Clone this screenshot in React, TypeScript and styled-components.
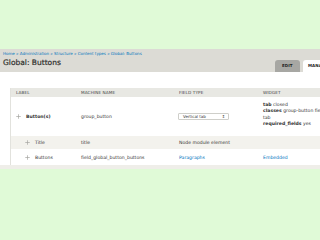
import React from 'react'
import styled, { createGlobalStyle } from 'styled-components'

const Global = createGlobalStyle`
  html, body {
    margin: 0;
    padding: 0;
    background: #e0fad7;
    overflow: hidden;
  }
  body {
    font-family: "DejaVu Sans", "Liberation Sans", sans-serif;
    color: #333;
  }
`

const Page = styled.div`
  width: 320px;
  height: 240px;
  padding-top: 49px;
  box-sizing: border-box;
  overflow: hidden;
`

const Header = styled.div`
  background: #dcdbd5;
  height: 23px;
  padding-left: 3px;
  display: flex;
  flex-direction: column;
  box-sizing: border-box;
`

const Crumbs = styled.div`
  font-size: 4px;
  line-height: 5px;
  padding-top: 2px;
  color: #0074bd;
  white-space: nowrap;
`

const TitleRow = styled.div`
  flex: 1;
  display: flex;
  align-items: flex-end;
  justify-content: space-between;
`

const Title = styled.h1`
  margin: 0 0 4px;
  font-size: 7.5px;
  line-height: 10px;
  font-weight: normal;
  color: #2e2e2b;
  -webkit-text-stroke: 0.2px #2e2e2b;
`

const Tabs = styled.div`
  display: flex;
  gap: 3px;
  align-self: flex-end;
  margin-right: -20px;
`

const Tab = styled.div<{ $active?: boolean }>`
  height: 12px;
  width: ${p => (p.$active ? '37px' : '25px')};
  box-sizing: border-box;
  padding-left: ${p => (p.$active ? '5px' : '7px')};
  border-radius: 3px 3px 0 0;
  background: ${p => (p.$active ? '#fff' : '#a7a7a3')};
  font-size: 4px;
  font-weight: bold;
  line-height: 12px;
  color: #222;
  letter-spacing: 0.1px;
`

const Content = styled.div`
  background: #fff;
  padding: 16px 0 0 10px;
  border-bottom: 4px solid #efeee9;
`

const Table = styled.div`
  width: 340px;
  border-left: 1px solid #e2e2dd;
  font-size: 4.6px;
  color: #333;
`

const Row = styled.div<{ $bg?: string; $height: number }>`
  display: grid;
  grid-template-columns: 65px 98px 84px 1fr;
  align-items: center;
  height: ${p => p.$height}px;
  background: ${p => p.$bg || '#fff'};
  white-space: nowrap;
`

const HeadCell = styled.div`
  padding-left: 5px;
  font-size: 4.2px;
  text-transform: uppercase;
  color: #444;
  letter-spacing: 0.1px;
`

const Cell = styled.div<{ $indent?: number; $bold?: boolean; $link?: boolean }>`
  padding-left: ${p => 5 + (p.$indent || 0)}px;
  display: flex;
  align-items: center;
  gap: 5px;
  font-weight: ${p => (p.$bold ? 'bold' : 'normal')};
  color: ${p => (p.$link ? '#0074bd' : '#333')};
`

const Handle = styled.svg`
  width: 5px;
  height: 5px;
  flex: none;
`

const Select = styled.div`
  width: 51px;
  height: 7px;
  box-sizing: border-box;
  border: 0.5px solid #cfcfca;
  border-radius: 1px;
  background: #fff;
  display: flex;
  align-items: center;
  justify-content: space-between;
  padding: 0 3px 0 4px;
  font-size: 4px;
  margin-left: -1px;
`

const Lines = styled.div`
  padding-left: 5px;
  align-self: start;
  padding-top: 5px;
  line-height: 6.4px;
`

const Key = styled.b`
  font-weight: bold;
`

const DragHandle = () => (
  <Handle viewBox="0 0 10 10">
    <path d="M5 0.5v9M0.5 5h9" stroke="#a5a5a0" strokeWidth="1.4" />
  </Handle>
)

export default function App() {
  return (
    <Page>
      <Global />
      <Header>
        <Crumbs>Home » Administration » Structure » Content types » Global: Buttons</Crumbs>
        <TitleRow>
          <Title>Global: Buttons</Title>
          <Tabs>
            <Tab>EDIT</Tab>
            <Tab $active>MANAGE</Tab>
          </Tabs>
        </TitleRow>
      </Header>
      <Content>
        <Table>
          <Row $height={9} $bg="#e8e8e3">
            <HeadCell>Label</HeadCell>
            <HeadCell>Machine name</HeadCell>
            <HeadCell>Field type</HeadCell>
            <HeadCell>Widget</HeadCell>
          </Row>
          <Row $height={39}>
            <Cell $bold>
              <DragHandle />
              Button(s)
            </Cell>
            <Cell>group_button</Cell>
            <Cell>
              <Select>
                <span>Vertical tab</span>
                <span>⇕</span>
              </Select>
            </Cell>
            <Lines>
              <div><Key>tab</Key> closed</div>
              <div><Key>classes</Key> group-button field-group-tab</div>
              <div>tab</div>
              <div><Key>required_fields</Key> yes</div>
            </Lines>
          </Row>
          <Row $height={13} $bg="#f3f2ed">
            <Cell $indent={9}>
              <DragHandle />
              Title
            </Cell>
            <Cell>title</Cell>
            <Cell>Node module element</Cell>
            <Cell />
          </Row>
          <Row $height={16}>
            <Cell $indent={9}>
              <DragHandle />
              Buttons
            </Cell>
            <Cell>field_global_button_buttons</Cell>
            <Cell $link>Paragraphs</Cell>
            <Cell $link>Embedded</Cell>
          </Row>
        </Table>
      </Content>
    </Page>
  )
}
